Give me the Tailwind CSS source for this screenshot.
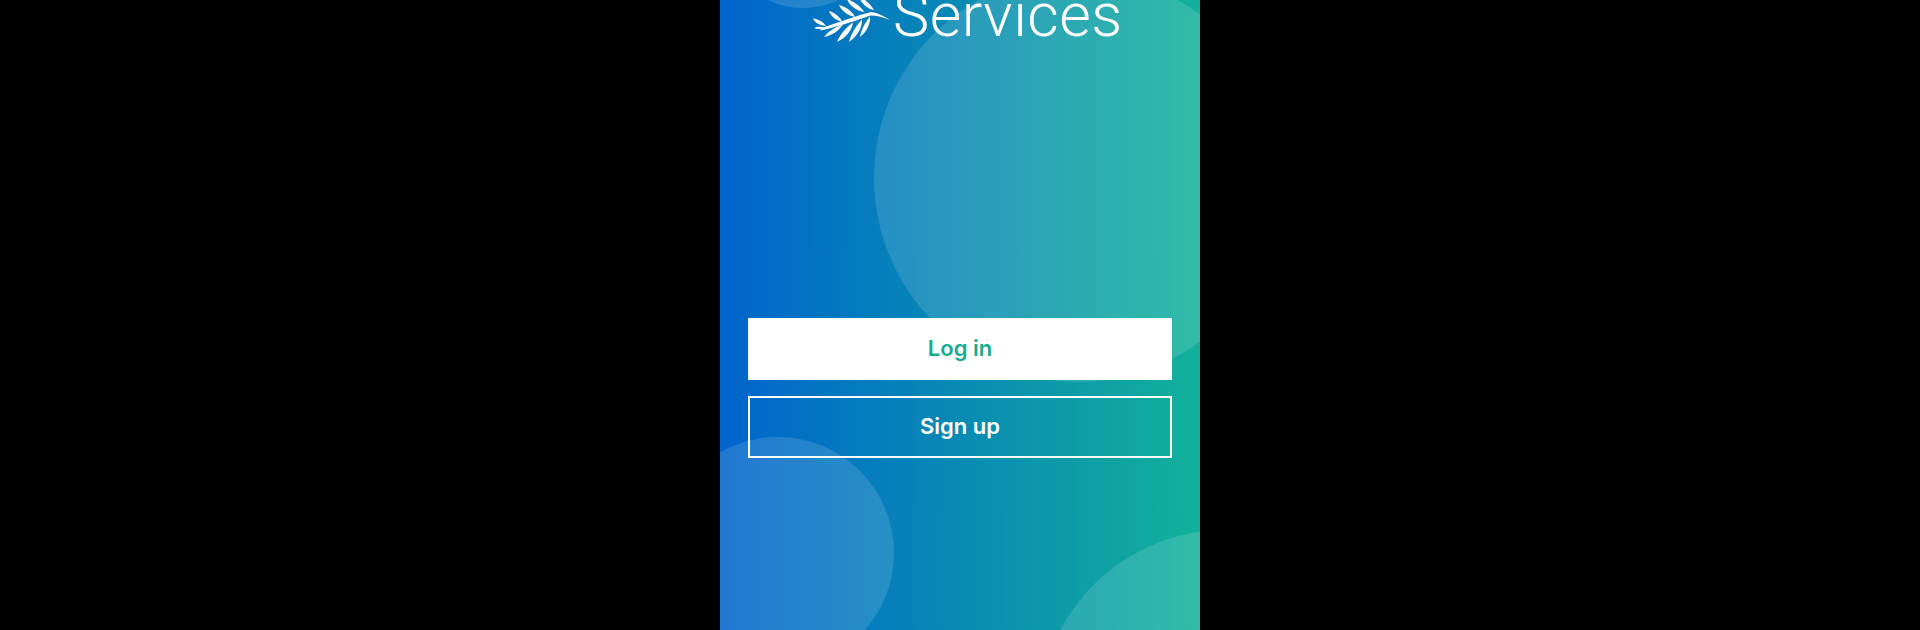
<!DOCTYPE html>
<html lang="en">
  <head>
    <meta charset="UTF-8" />
    <meta name="viewport" content="width=device-width, initial-scale=1.0" />
    <title>Services</title>
    <script src="https://cdn.jsdelivr.net/npm/@tailwindcss/browser@4"></script>
  </head>
  <body class="bg-black h-screen flex justify-center overflow-hidden font-['Inter',sans-serif]">
    <div class="relative w-[480px] h-[630px] overflow-hidden bg-linear-to-r/srgb from-[#0064cd] to-[#12b19a]">
      <!-- background blobs -->
      <div class="absolute left-[3px] top-[-152px] w-[160px] h-[160px] rounded-full bg-white/[0.13]"></div>
      <div class="absolute left-[154px] top-[-26px] w-[408px] h-[408px] rounded-full bg-white/[0.13]"></div>
      <div class="absolute left-[-58px] top-[437px] w-[232px] h-[232px] rounded-full bg-white/[0.13]"></div>
      <div class="absolute left-[319px] top-[530px] w-[374px] h-[374px] rounded-full bg-white/[0.13]"></div>

      <div class="relative flex flex-col px-7">
        <div class="h-[48px] flex items-end overflow-hidden ml-[57px]">
          <svg class="w-[90px] h-[45px] mb-[3px] -mr-[2px] shrink-0" viewBox="0 0 90 45" fill="#fff">
            <path d="M85 20C79 16 73 13 66 12C52 15.500 36 21.500 15 28.500L16 30.500C36 25.500 52 20.500 65 15.500C72 15.500 79 17.500 85 20Z" />
            <path d="M8 18.500C13 19 18 21.500 21 26C16 25.500 10 23.500 8 18.500Z" />
            <path d="M9 28C12 26.500 16 26.500 19 27.500C16 29.500 12 29.500 9 28Z" />
            <path d="M24 11C30 13 35 17 37 21.500C31 20.500 26 16.500 24 11Z" />
            <path d="M34 5C41 7 47 11 50 17C43 15.500 37 11.500 34 5Z" />
            <path d="M42 -1C49 1.500 55 6 59.500 12C52 11 45 6.500 42 -1Z" />
            <path d="M54 -3C60 -1 65 3.500 69 10C62 8.500 57 4 54 -3Z" />
            <path d="M19 37C23 31.500 30 27 38 24.500C33.500 31 27 35.500 19 37Z" />
            <path d="M32 42C35 34.500 41 27.500 48 22.500C47 30.500 40.500 38 32 42Z" />
            <path d="M44 42C46 34 51 25.500 57 19.500C57.500 27.500 52 36.500 44 42Z" />
            <path d="M55 37C56 30 60 22.500 65 16.500C65.500 23.500 62 31.500 55 37Z" />
          </svg>
          <span class="font-['Roboto',sans-serif] font-light text-[61px] leading-none tracking-[0.5px] text-white mb-[2px]">Services</span>
        </div>

        <div class="mt-[270px] flex flex-col gap-4">
          <button class="h-[62px] bg-white text-[#1aab8f] text-[22px] font-semibold pb-[1px]">Log in</button>
          <button class="h-[62px] border-2 border-white text-white text-[22px] font-semibold pb-[1px]">Sign up</button>
        </div>
      </div>
    </div>
  </body>
</html>
